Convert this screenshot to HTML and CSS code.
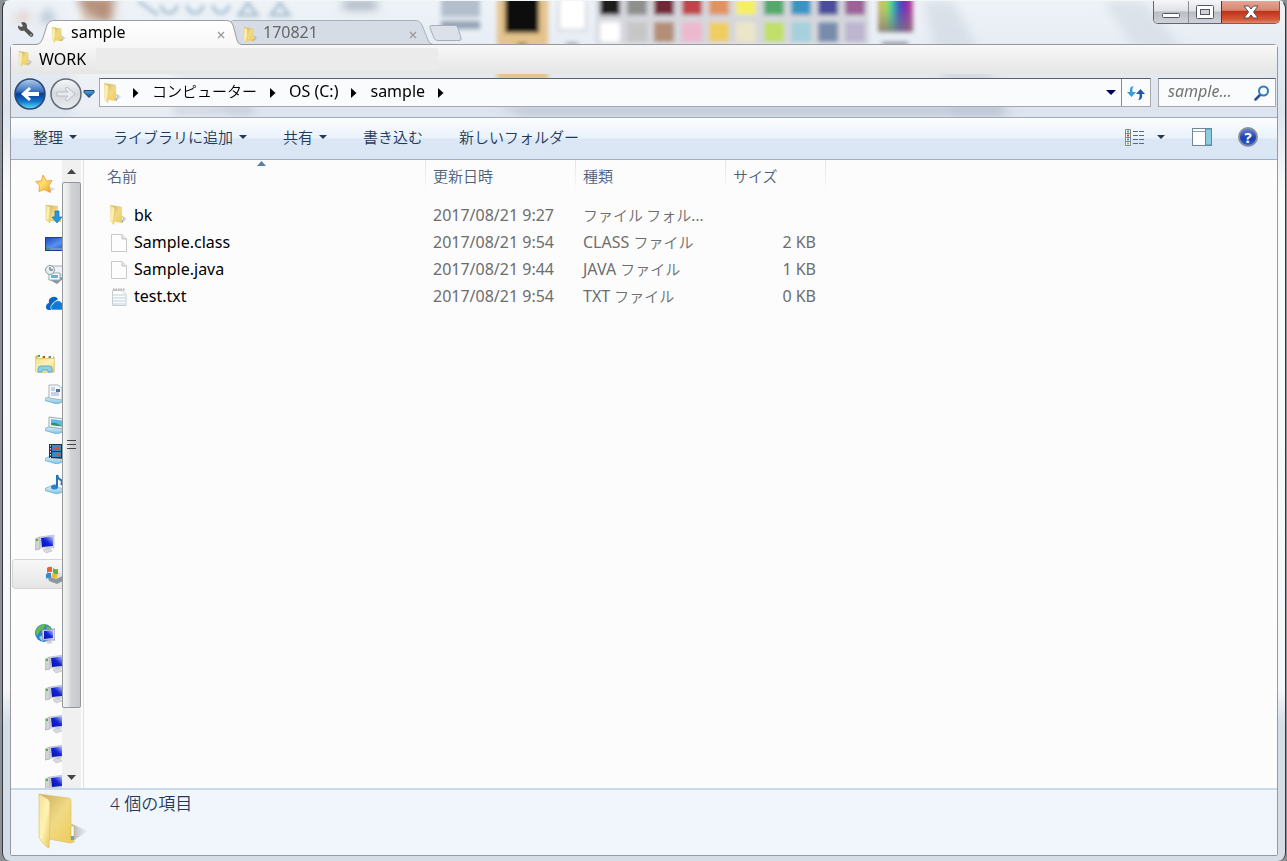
FILE: index.html
```html
<!DOCTYPE html>
<html lang="ja">
<head>
<meta charset="utf-8">
<title>sample</title>
<link rel="stylesheet" href="styles.css">
</head>
<body>
<svg class="defs" aria-hidden="true">
  <defs>
    <linearGradient id="gFront" x1="0" y1="0" x2="1" y2="1"><stop offset="0" stop-color="#f3e09a"/><stop offset=".5" stop-color="#fff3b4"/><stop offset="1" stop-color="#e9c65a"/></linearGradient>
    <linearGradient id="gBack" x1="0" y1="0" x2="1" y2="1"><stop offset="0" stop-color="#c9ad5c"/><stop offset=".5" stop-color="#f0da86"/><stop offset="1" stop-color="#eccb55"/></linearGradient>
    <linearGradient id="gScreen" x1="0" y1="1" x2="1" y2="0"><stop offset="0" stop-color="#0610a0"/><stop offset=".5" stop-color="#1424d8"/><stop offset="1" stop-color="#c8d4ff"/></linearGradient>
    <linearGradient id="gDesk" x1="0" y1="0" x2="1" y2="1"><stop offset="0" stop-color="#1c4bc4"/><stop offset=".6" stop-color="#5a90f0"/><stop offset="1" stop-color="#2a5fd8"/></linearGradient>
    <linearGradient id="gStar" x1="0" y1="0" x2="1" y2="1"><stop offset="0" stop-color="#ffc07a"/><stop offset=".45" stop-color="#ffe070"/><stop offset="1" stop-color="#f59a1c"/></linearGradient>
    <linearGradient id="gTray" x1="0" y1="0" x2="0" y2="1"><stop offset="0" stop-color="#e4f5fb"/><stop offset="1" stop-color="#7dc0de"/></linearGradient>
    <linearGradient id="gBlueBtn" x1="0" y1="0" x2="0" y2="1"><stop offset="0" stop-color="#b4cdec"/><stop offset=".4" stop-color="#3a74c4"/><stop offset=".5" stop-color="#0a3a94"/><stop offset=".75" stop-color="#1478cc"/><stop offset="1" stop-color="#5ce4fc"/></linearGradient>
    <linearGradient id="gGrayBtn" x1="0" y1="0" x2="0" y2="1"><stop offset="0" stop-color="#f6f7f9"/><stop offset=".5" stop-color="#d5d9df"/><stop offset="1" stop-color="#e9ecf0"/></linearGradient>
    <linearGradient id="gArrow" x1="0" y1="0" x2="0" y2="1"><stop offset="0" stop-color="#48a8dc"/><stop offset="1" stop-color="#1a4aa0"/></linearGradient>
    <linearGradient id="gRainbow"><stop offset="0" stop-color="#c8a878"/><stop offset=".2" stop-color="#b8d84c"/><stop offset=".4" stop-color="#3cd0a0"/><stop offset=".6" stop-color="#3c50c8"/><stop offset=".8" stop-color="#8428b0"/><stop offset="1" stop-color="#c85090"/></linearGradient>
    <linearGradient id="gShade" x1="0" y1="0" x2="0" y2="1"><stop offset=".3" stop-color="#888" stop-opacity="0"/><stop offset="1" stop-color="#807078" stop-opacity=".8"/></linearGradient>
    <linearGradient id="gTab" x1="0" y1="0" x2="0" y2="1"><stop offset="0" stop-color="#fff"/><stop offset="1" stop-color="#f7f7f7"/></linearGradient>
    <linearGradient id="gShadow"><stop offset="0" stop-color="#8a8f9a" stop-opacity=".7"/><stop offset="1" stop-color="#8a8f9a" stop-opacity="0"/></linearGradient>
    <filter id="soft" x="-5%" y="-20%" width="110%" height="140%"><feGaussianBlur stdDeviation="2"/></filter>
    <filter id="softer" x="-20%" y="-20%" width="140%" height="140%"><feGaussianBlur stdDeviation="5"/></filter>
    <symbol id="folder" viewBox="0 0 50 56">
      <path d="M32 50 L50 38 L34 31Z" fill="url(#gShadow)"/>
      <path d="M1 1 L30 5 Q33 5 33 8 V31 L36 33 V49 L32 50 L11 46Z" fill="url(#gBack)" stroke="#d9bd66" stroke-width=".6"/>
      <path d="M33 33h3v13h-3z" fill="#fff" stroke="#c9a94c" stroke-width=".6"/><path d="M33 43h3v4h-3z" fill="#5aa6dc"/>
      <path d="M1 1 L10 6 Q12 8 12 12 V35 L11 55 L9 54 Q1 47 1 43Z" fill="url(#gFront)" stroke="#dcbf60" stroke-width=".6"/>
    </symbol>
    <symbol id="file" viewBox="0 0 16 18"><path d="M.5.5H11L15.500 5V17.500H.5Z" fill="#fdfdfd" stroke="#c9c9c9"/><path d="M11 .5V5H15.500" fill="#e4e4e4" stroke="#c4c4c4"/></symbol>
    <symbol id="text" viewBox="0 0 16 18"><path d="M1.500 2.500H11L15 6V17.500H1.500Z" fill="#fafcfd" stroke="#c8ced2"/><path d="M2 7h12M2 10h13M2 13h13M2 16h13" stroke="#cfe0e9" stroke-width="1.500"/><path d="M2 1.500h12" stroke="#aaa" stroke-width="2" stroke-dasharray="1.500 1"/></symbol>
    <symbol id="star" viewBox="0 0 20 20"><path d="M12 19 L20 15 L16 13Z" fill="#d8d8e0"/><path d="M8 1 L11.500 7 L17 6.500 L14 11.500 L15.500 18.500 L9 15.500 L4 17.500 L4.500 11.500 L.8 7.500 L6.500 6.800Z" fill="url(#gStar)" stroke="#e99a32" stroke-width=".8"/></symbol>
    <symbol id="download" viewBox="0 0 20 20"><path d="M1 1l12 1v12l3 1v3l-12-1z" fill="url(#gBack)"/><path d="M1 1l4 2v16l-4-3z" fill="url(#gFront)" stroke="#d5b964" stroke-width=".5"/><path d="M10 7h4v6h3l-5 6-5-6h3z" fill="#2696e0" stroke="#1370bc" stroke-width=".7"/></symbol>
    <symbol id="desktop" viewBox="0 0 20 20"><path d="M0 3h20v14H0z" fill="#1a3f9e"/><path d="M1 4h19v10H1z" fill="url(#gDesk)"/><path d="M1 14h19v2H1z" fill="#6f96c0"/><path d="M1 14h4v2H1z" fill="#3c9a58"/></symbol>
    <symbol id="recent" viewBox="0 0 20 20"><path d="M3 15l9-4 7 3-7 6z" fill="#8c979e"/><path d="M7 2h11v9H7z" fill="#eef3f7" stroke="#a2adb8"/><path d="M4 9h11v7H4z" fill="#fff" stroke="#9aa8b4"/><path d="M6 11h7v3H6z" fill="#56b8dc"/><circle cx="5" cy="6" r="4.500" fill="#e4edf2" stroke="#8c9aa4"/><path d="M5 3v3h3" fill="none" stroke="#556"/></symbol>
    <symbol id="cloud" viewBox="0 0 20 20"><path d="M1 13a4 4 0 0 1 3-4a5 5 0 0 1 9-4l-6 5-1 6H4a3 3 0 0 1-3-3z" fill="#0a66c0"/><path d="M7 16a3.500 3.500 0 0 1 1-6a5 5 0 0 1 9-1q3 1 3 7z" fill="#0c7cdc" stroke="#fff" stroke-width=".6"/></symbol>
    <symbol id="library" viewBox="0 0 20 20"><path d="M1 2h5l1 1h12v15H1z" fill="#e8cf70" stroke="#c8a944"/><path d="M3 1h4v3H3zM8 2h5v2H8zM14 2h4v2h-4z" fill="#fff"/><path d="M3 1h2v2H3z" fill="#34b04c"/><path d="M8 2h2v2H8z" fill="#d84830"/><path d="M14 2h2v2h-2z" fill="#3c90dc"/><path d="M1 5h18v13H1z" fill="url(#gFront)"/><path d="M3 18v-3q0-3 3-3h8q3 0 3 3v3h-4v-2H7v2z" fill="#8dd0ea" stroke="#5caed0"/></symbol>
    <symbol id="tray" viewBox="0 0 20 20"><path d="M0 14.500L6 12l14 3v2l-8 3L0 16.500Z" fill="url(#gTray)" stroke="#68aed0" stroke-width=".8"/></symbol>
    <symbol id="docs" viewBox="0 0 20 20"><use href="#tray"/><path d="M4 1h9l4 3v12L4 14z" fill="#f8fafc" stroke="#a6b2c2"/><path d="M6 4h4M6 6h4M6 9h8M6 11h8" stroke="#98a8c8"/><path d="M11 5h4v3h-4z" fill="#3f78c4"/></symbol>
    <symbol id="pics" viewBox="0 0 20 20"><use href="#tray"/><path d="M4 3l15 2v10L4 13z" fill="#f4f7fa" stroke="#98aabd"/><path d="M6 5l11 1.500v6L6 11z" fill="#5eb8e4"/><path d="M6 9l5 0 6 3.500-11-1.500z" fill="#329262"/></symbol>
    <symbol id="video" viewBox="0 0 20 20"><use href="#tray"/><path d="M4 0h15v15L4 14z" fill="#283440"/><path d="M7 1h9v6H7zM7 8h9v5H7z" fill="#348ccc"/><path d="M9 4l4-2 3 4H8zM10 11l4-2 2 3z" fill="#d4542c"/><path d="M5.500 1v13M17.500 1v13" stroke="#dce4e8" stroke-dasharray="1.500 1.500"/></symbol>
    <symbol id="music" viewBox="0 0 20 20"><use href="#tray"/><ellipse cx="9.500" cy="13" rx="3.500" ry="2.500" fill="#2484cc"/><path d="M12 13V1q1 4 4 5 2 2 0 5" fill="none" stroke="#2474bc" stroke-width="2"/></symbol>
    <symbol id="pc" viewBox="0 0 20 20"><path d="M0 5l5-2v12l-5 1z" fill="#d0d4d6" stroke="#a4aaae" stroke-width=".7"/><path d="M1 5h2v2H1z" fill="#48b43c"/><path d="M8 16l6-2 3 3-6 2z" fill="#d7d9dc" stroke="#b0b4b8" stroke-width=".5"/><path d="M5 3L19 1v13L6 14z" fill="#dde1e8" stroke="#abb0bb" stroke-width=".6"/><path d="M6 4l12-2v10L7 13z" fill="url(#gScreen)"/></symbol>
    <symbol id="drive" viewBox="0 0 20 20"><path d="M3 14l10-5 7 2v5l-8 4-8-3z" fill="#8f979b"/><path d="M5 13l9-4 6 2-9 4z" fill="#dfe3e5"/><path d="M2 4q2-2 5-1v5q-3-1-5 1z" fill="#e4642c"/><path d="M8 4q2 2 5 1v5q-3 1-5-1z" fill="#63b040"/><path d="M1 10q3-2 5-1v5q-3-1-5 1z" fill="#3488d0"/><path d="M7 9q2 2 5 1v4q-3 1-5-1z" fill="#f0b828"/></symbol>
    <symbol id="network" viewBox="0 0 20 20"><circle cx="9" cy="9" r="9" fill="#2d80cc"/><path d="M2 4q4-4 9-4l-2 4-4 3-3 5q-2-4 0-8zM11 2l4 1 2 5h-5z" fill="#62bd4a"/><path d="M4 13l4-2v6q-3-1-4-4z" fill="#8cd0f0"/><path d="M10 17l5-1 3 3-5 1z" fill="#d0d4da"/><path d="M7 6l13-1v11H8z" fill="#dde1e8" stroke="#9098b4"/><path d="M9 7l9-1v8l-9 1z" fill="url(#gScreen)"/></symbol>
    <symbol id="right" viewBox="0 0 6 10"><path d="M0 0l5.500 5L0 10z" fill="#000"/></symbol>
    <symbol id="down" viewBox="0 0 8 4"><path d="M0 0h8L4 4z" fill="currentColor"/></symbol>
    <symbol id="cross" viewBox="0 0 8 8"><path d="M1 1l6 6M7 1L1 7" stroke="#999" stroke-width="1.300"/></symbol>
  </defs>
</svg>

<div class="window">
  <svg class="backdrop" width="1200" height="117" aria-hidden="true">
    <g filter="url(#softer)">
      <path d="M74 -5L112 -5 108 22 80 22Z" fill="#a87858" opacity=".8"/>
      <path d="M8 20l14-12 6 12z" fill="#d8a79a" opacity=".5"/>
      <path d="M36 20l10-14 6 16z" fill="#8696b0" opacity=".6"/>
      <path d="M70 0L230 117H70Z" fill="#fff" opacity=".4"/>
      <path d="M920 0H950L1010 117H950Z" fill="#bfc8d4" opacity=".4"/>
      <path d="M1100 0H1140L1190 60H1140Z" fill="#cdd4de" opacity=".5"/>
      <path d="M495 106h505v8H520zM170 106h80v6h-80z" fill="#aab4c4" opacity=".7"/>
      <path d="M340 4h34" stroke="#8c98a6" stroke-width="8" opacity=".8"/>
    </g>
    <g filter="url(#soft)">
      <path d="M135 0l20 14M158 4a8 8 0 0 0 16 0M184 4a8 8 0 0 0 16 0M210 4a8 8 0 0 0 16 0M236 14l9-12 9 12zM268 14l9-12 9 12z" fill="none" stroke="#a9bfd0" stroke-width="3"/>
      <path d="M438 -4h39v20h-39z" fill="#b4bfcd"/><path d="M438 20h39v8h-39z" fill="#95a3b6"/>
      <path d="M494 -5h51v84h-51z" fill="#e4c38d"/><path d="M502 -5h34v37h-34z" fill="#0b0b0b"/><path d="M513 42l6 5 6-5z" fill="#666"/>
      <path d="M556 -5h27v34h-27z" fill="#fff" stroke="#ccd2d8" stroke-width="2"/><path d="M563 42h12v2h-12z" fill="#778"/>
      <path d="M593 -5h273v49H593z" fill="#d5d7dd"/>
      <path d="M875 -5h35v36h-35z" fill="url(#gRainbow)"/><path d="M875 -5h35v36h-35z" fill="url(#gShade)"/><path d="M879 41h26v4h-26z" fill="#8c949e"/>
      <g>
        <path d="M597 -6h20v20h-20z" fill="#1b1b1b"/><path d="M624 -6h20v20h-20z" fill="#8f8f8f"/><path d="M651 -6h20v20h-20z" fill="#732736"/><path d="M679 -6h20v20h-20z" fill="#bf444a"/><path d="M706 -6h20v20h-20z" fill="#df9460"/><path d="M733 -6h20v20h-20z" fill="#f5ef65"/><path d="M761 -6h20v20h-20z" fill="#52a96c"/><path d="M788 -6h20v20h-20z" fill="#3995c2"/><path d="M815 -6h20v20h-20z" fill="#484d9b"/><path d="M842 -6h20v20h-20z" fill="#9b6299"/>
        <path d="M597 21h20v20h-20z" fill="#fff"/><path d="M624 21h20v20h-20z" fill="#c7c7c7"/><path d="M651 21h20v20h-20z" fill="#b28d77"/><path d="M679 21h20v20h-20z" fill="#edb8cd"/><path d="M706 21h20v20h-20z" fill="#f0cd5e"/><path d="M733 21h20v20h-20z" fill="#ebe5c9"/><path d="M761 21h20v20h-20z" fill="#c0e068"/><path d="M788 21h20v20h-20z" fill="#a6d0dc"/><path d="M815 21h20v20h-20z" fill="#778cab"/><path d="M842 21h20v20h-20z" fill="#bdb5d2"/>
      </g>
    </g>
  </svg>

  <header class="titlebar">
    <button class="wrench" aria-label="設定"><svg width="17" height="17" viewBox="0 0 17 17"><path d="M4 1.500L7 1q3 1 3 4v2l6 5.500q1 2-.5 3t-3-.5L7 9.500q-4 1.500-6-3V4.500L4 6l2-1z" fill="#555"/><circle cx="14" cy="14" r=".8" fill="#ddd"/></svg></button>
    <nav class="tabs">
      <div class="tab active">
        <svg class="tab-shape" viewBox="0 0 204 25" preserveAspectRatio="none" aria-hidden="true"><path d="M0 24.500Q4 24 6 18L10 5Q12 .5 16 .5H189Q194 .5 196 5L200 20Q201 24 204 24.500V25H0Z" fill="url(#gTab)"/><path d="M0 24.500Q4 24 6 18L10 5Q12 .5 16 .5H189Q194 .5 196 5L200 20Q201 24 204 24.500" fill="none" stroke="#9a9da2"/></svg>
        <svg class="icon16"><use href="#folder"/></svg><a href="#">sample</a>
        <button class="close-tab" aria-label="閉じる"><svg width="8" height="8"><use href="#cross"/></svg></button>
      </div>
      <div class="tab">
        <svg class="tab-shape" viewBox="0 0 204 25" preserveAspectRatio="none" aria-hidden="true"><path d="M0 5Q0 .5 6 .5H186Q191 .5 193 5L199 20Q200 24 204 24.500H7Z" fill="#d6dce5" stroke="#abb1ba"/></svg>
        <svg class="icon16"><use href="#folder"/></svg><a href="#">170821</a>
        <button class="close-tab" aria-label="閉じる"><svg width="8" height="8"><use href="#cross"/></svg></button>
      </div>
      <button class="new-tab" aria-label="新しいタブ"><svg width="33" height="17"><path d="M3 .5H26Q28 .5 29 3L32 13Q33 15.500 30 15.500H9Q6 15.500 5 13L1 3Q0 .5 3 .5Z" fill="#dce1e9" stroke="#a9aeb6"/></svg></button>
    </nav>
    <div class="controls">
      <button class="min" aria-label="最小化"><svg width="18" height="6"><rect x=".5" y=".5" width="17" height="4" rx="1" fill="#fff" stroke="#535666"/></svg></button>
      <button class="max" aria-label="最大化"><svg width="18" height="14"><rect x=".5" y=".5" width="17" height="13" rx="1" fill="#fff" stroke="#535666"/><rect x="4.500" y="4.500" width="9" height="5" fill="#d0d2d8" stroke="#535666"/></svg></button>
      <button class="close" aria-label="閉じる"><svg width="16" height="14"><path d="M1 1h4.500L8 4l2.500-3H15l-4.500 6L15 13h-4.500L8 10l-2.500 3H1l4.500-6z" fill="#fff" stroke="#5b4a50"/></svg></button>
    </div>
  </header>

  <div class="client">
    <div class="bookmarks"><svg class="icon16"><use href="#folder"/></svg><a href="#">WORK</a><span class="blank"></span></div>

    <div class="navbar">
      <div class="history">
        <button aria-label="戻る"><svg width="32" height="32" viewBox="0 0 32 32"><circle cx="16" cy="16" r="15" fill="url(#gBlueBtn)" stroke="#2c4770" stroke-width="1.500"/><path d="M7 16l8-7 2 2-3 3h11v4H14l3 3-2 2z" fill="#fff"/></svg></button>
        <button aria-label="進む"><svg width="32" height="32" viewBox="0 0 32 32"><circle cx="16" cy="16" r="15" fill="url(#gGrayBtn)" stroke="#646a74" stroke-width="1.500"/><path d="M25 16l-8-7-2 2 3 3H7v4h11l-3 3 2 2z" fill="#e9ebee" stroke="#b8bcc4"/></svg></button>
        <button aria-label="履歴"><svg width="12" height="8"><path d="M1 .5h10v2L6 7.500 1 2.500z" fill="url(#gArrow)" stroke="#28466c"/></svg></button>
      </div>
      <div class="address">
        <svg class="icon20"><use href="#folder"/></svg>
        <svg class="chev"><use href="#right"/></svg><a href="#" class="jp">コンピューター</a>
        <svg class="chev"><use href="#right"/></svg><a href="#">OS (C:)</a>
        <svg class="chev"><use href="#right"/></svg><a href="#">sample</a>
        <svg class="chev"><use href="#right"/></svg>
        <button class="drop" aria-label="アドレス一覧"><svg width="10" height="5"><use href="#down"/></svg></button>
        <button class="refresh" aria-label="更新"><svg width="18" height="18" viewBox="0 0 18 18"><path d="M7 2Q5 3 5.500 8H9l-4.500 5L0 8h3Q2 2 7 2z" fill="#3c9cd4"/><path d="M11 16q2-1 1.500-6H9l4.500-5L18 10h-3q1 6-4 6z" fill="#2358ac"/></svg></button>
      </div>
      <label class="search"><input type="text" placeholder="sample..." aria-label="sampleの検索"><svg width="16" height="16" viewBox="0 0 16 16"><path d="M6.500 9.500L1.500 14.500" stroke="#264f94" stroke-width="2.500" stroke-linecap="round"/><circle cx="9.500" cy="6" r="4.500" fill="#f5faff" stroke="#3477bb" stroke-width="2"/></svg></label>
    </div>

    <div class="toolbar jp">
      <button>整理<svg class="caret"><use href="#down"/></svg></button>
      <button>ライブラリに追加<svg class="caret"><use href="#down"/></svg></button>
      <button>共有<svg class="caret"><use href="#down"/></svg></button>
      <button>書き込む</button>
      <button>新しいフォルダー</button>
      <div class="views">
        <button aria-label="表示"><svg width="19" height="17"><path d="M.5.500h5v16h-5zM.5 4.500h5M.5 8.500h5M.5 12.500h5" fill="#fff" stroke="#7f8894"/><path d="M2 2.500h2" stroke="#4ba04c" stroke-width="2"/><path d="M2 6.500h2" stroke="#dd3c24" stroke-width="2"/><path d="M2 10.500h2" stroke="#3c8ce0" stroke-width="2"/><path d="M2 14.500h2" stroke="#a0b020" stroke-width="2"/><path d="M8 2.500h11M8 6.500h11M8 10.500h11M8 14.500h11" stroke="#536b88" stroke-dasharray="5 1"/></svg></button>
        <button aria-label="表示の変更"><svg class="caret"><use href="#down"/></svg></button>
        <button class="preview" aria-label="プレビュー"><svg width="20" height="18"><rect x=".5" y=".5" width="19" height="17" fill="#fff" stroke="#6f8799"/><path d="M1 3.500h12" stroke="#8ba0b0"/><path d="M13.500 1h6v16h-6z" fill="#8ccbe0" stroke="#4c91ae"/></svg></button>
        <button class="help" aria-label="ヘルプ">?</button>
      </div>
    </div>

    <main class="content">
      <aside class="tree">
        <ul>
          <li><svg><use href="#star"/></svg></li>
          <li class="sub"><svg><use href="#download"/></svg></li>
          <li class="sub"><svg><use href="#desktop"/></svg></li>
          <li class="sub"><svg><use href="#recent"/></svg></li>
          <li class="sub"><svg><use href="#cloud"/></svg></li>
          <li></li>
          <li><svg><use href="#library"/></svg></li>
          <li class="sub"><svg><use href="#docs"/></svg></li>
          <li class="sub"><svg><use href="#pics"/></svg></li>
          <li class="sub"><svg><use href="#video"/></svg></li>
          <li class="sub"><svg><use href="#music"/></svg></li>
          <li></li>
          <li><svg><use href="#pc"/></svg></li>
          <li class="sub selected"><svg><use href="#drive"/></svg></li>
          <li></li>
          <li><svg><use href="#network"/></svg></li>
          <li class="sub"><svg><use href="#pc"/></svg></li>
          <li class="sub"><svg><use href="#pc"/></svg></li>
          <li class="sub"><svg><use href="#pc"/></svg></li>
          <li class="sub"><svg><use href="#pc"/></svg></li>
          <li class="sub"><svg><use href="#pc"/></svg></li>
        </ul>
      </aside>
      <div class="scrollbar">
        <button aria-label="上へ"><svg width="9" height="5"><path d="M0 5h9L4.500 0z" fill="#444"/></svg></button>
        <div class="track"><div class="thumb"><i></i><i></i><i></i></div></div>
        <button aria-label="下へ"><svg width="9" height="5"><path d="M0 0h9L4.500 5z" fill="#444"/></svg></button>
      </div>
      <div class="files">
        <table>
          <colgroup><col class="c-name"><col class="c-date"><col class="c-type"><col class="c-size"><col></colgroup>
          <thead><tr><th class="jp sorted">名前<svg class="sort" width="9" height="5"><path d="M0 5L4.500 0 9 5z" fill="#5b7fa6"/></svg></th><th class="jp">更新日時</th><th class="jp">種類</th><th class="jp">サイズ</th><th class="rest"></th></tr></thead>
          <tbody>
            <tr><td><div class="name"><svg class="icon20"><use href="#folder"/></svg><a href="#">bk</a></div></td><td>2017/08/21 9:27</td><td><span class="jp">ファイル フォル...</span></td><td></td><td></td></tr>
            <tr><td><div class="name"><svg class="icon18"><use href="#file"/></svg><a href="#">Sample.class</a></div></td><td>2017/08/21 9:54</td><td>CLASS <span class="jp">ファイル</span></td><td>2 KB</td><td></td></tr>
            <tr><td><div class="name"><svg class="icon18"><use href="#file"/></svg><a href="#">Sample.java</a></div></td><td>2017/08/21 9:44</td><td>JAVA <span class="jp">ファイル</span></td><td>1 KB</td><td></td></tr>
            <tr><td><div class="name"><svg class="icon18"><use href="#text"/></svg><a href="#">test.txt</a></div></td><td>2017/08/21 9:54</td><td>TXT <span class="jp">ファイル</span></td><td>0 KB</td><td></td></tr>
          </tbody>
        </table>
      </div>
    </main>

    <footer class="status"><svg width="50" height="56"><use href="#folder"/></svg><p>4 個の項目</p></footer>
  </div>
</div>
</body>
</html>
```

FILE: styles.css
```css
* { box-sizing: border-box; }

body {
  margin: 0;
  background: #8d9095;
  font: 16px/20px "Noto Sans", "Noto Sans CJK JP", sans-serif;
  color: #000;
}

button { margin: 0; padding: 0; border: 0; background: none; font: inherit; color: inherit; }
a { color: inherit; text-decoration: none; }
svg { display: block; flex: none; }
.defs { position: absolute; width: 0; height: 0; }
.jp { font-family: "Noto Sans CJK JP", sans-serif; font-size: 15px; font-weight: 350; }
.icon16 { width: 16px; height: 16px; }
.icon18 { width: 16px; height: 18px; }
.icon20 { width: 20px; height: 20px; }

.window {
  position: relative;
  display: flex;
  flex-direction: column;
  min-height: 100vh;
  margin: 0 1px 0 2px;
  padding: 0 7px 5px 7px;
  border: 1px solid #34383e;
  border-top-color: #f3f6f8;
  border-bottom: 0;
  border-radius: 8px;
  background: linear-gradient(#eef3f8, #dde4ee 110px, #fafbfc 190px, #f5f7fa 80%, #d5dde7 84%);
  overflow: hidden;
}

.backdrop { position: absolute; top: 0; left: 0; }

.titlebar { position: relative; display: flex; align-items: flex-end; height: 43px; }
.wrench { align-self: flex-start; margin: 20px 0 0 7px; }
.tabs { display: flex; align-items: flex-end; margin-left: 3px; }

.tab {
  position: relative;
  display: flex;
  align-items: center;
  gap: 4px;
  width: 204px;
  height: 24px;
  padding: 0 16px 0 14px;
  color: #666;
}
.tab + .tab { margin-left: -12px; }
.tab.active { z-index: 1; color: #000; }
.tab > * { position: relative; }
.tab > .tab-shape { position: absolute; left: 0; top: 0; width: 100%; height: 25px; }
.tab .icon16 { margin-top: 6px; }
.close-tab { margin: 6px 0 0 auto; }
.new-tab { margin: 0 0 2px -4px; }

.controls {
  display: flex;
  align-self: flex-start;
  margin-left: auto;
  margin-right: -2px;
  border: 1px solid #63666f;
  border-top: 0;
  border-radius: 0 0 5px 5px;
  overflow: hidden;
}
.controls button {
  display: grid;
  place-items: center;
  height: 22px;
  background: linear-gradient(#f4f5f7, #dfe1e5 45%, #b9bdc5 50%, #cfd2d8);
  border-left: 1px solid #888c95;
}
.controls .min { width: 34px; padding-top: 8px; border-left: 0; }
.controls .max { width: 33px; }
.controls .close { width: 58px; background: linear-gradient(#e6a595, #d98670 42%, #bd3219 48%, #d75a38 85%, #e5876c); border-color: #6e2a22; }

.client {
  position: relative;
  display: flex;
  flex: 1;
  flex-direction: column;
  border: 1px solid #96999e;
  border-radius: 4px 4px 2px 2px;
}

.bookmarks {
  display: flex;
  align-items: center;
  gap: 5px;
  height: 29px;
  padding: 0 0 2px 7px;
  background: linear-gradient(#f8f8f8, #e5e5e5);
}
.bookmarks .blank { width: 342px; height: 22px; margin-left: 5px; background: #ebebeb; }

.navbar { display: flex; align-items: flex-start; height: 43px; padding: 4px 1px 0 3px; }
.history { display: flex; align-items: center; width: 85px; gap: 4px; }
.history button:last-child { margin-left: -3px; }
.address, .search {
  display: flex;
  align-items: center;
  height: 29px;
  border: 1px solid #a4a8ae;
  border-top-color: #5c6066;
  background: #fafbfc;
}
.address { flex: 1; padding-left: 3px; }
.address .chev { width: 6px; height: 10px; margin: 0 13px; }
.address .icon20 { margin-right: -3px; }
.address a { padding-bottom: 4px; }
.address .drop { margin-left: auto; padding: 0 5px; color: #000060; }
.address .refresh { display: grid; place-items: center; width: 29px; height: 27px; border-left: 1px solid #85898f; }
.search { width: 118px; margin-left: 7px; padding: 0 5px 0 9px; }
.search input { flex: 1; width: 0; height: 24px; padding: 0 0 3px; border: 0; outline: 0; background: none; font: italic 16px/20px "Noto Sans", sans-serif; }
.search input::placeholder { color: #737373; opacity: 1; }

.toolbar {
  display: flex;
  align-items: center;
  gap: 36px;
  height: 43px;
  padding: 0 19px 3px 22px;
  border-top: 1px solid #a2aac2;
  border-bottom: 1px solid #a0afc6;
  background: linear-gradient(#fcfeff, #eaf2fb 48%, #dce7f5 52%, #dbe6f4);
  color: #1e395b;
}
.toolbar button { display: flex; align-items: center; gap: 6px; }
.caret { width: 8px; height: 4px; }
.views { display: flex; align-items: center; margin-left: auto; }
.views button + button { margin-left: 13px; }
.views .preview { margin-left: 27px; }
.toolbar .views .help {
  justify-content: center;
  width: 20px;
  height: 20px;
  margin-left: 26px;
  border: 2px solid #8a8fa0;
  border-radius: 50%;
  background: linear-gradient(#5f7fd8, #1c3cb0 60%, #2f64d0);
  color: #fff;
  font-family: "Noto Sans", sans-serif;
  font-weight: 700;
}

.content { display: flex; flex: 1; background: #fcfcfc; }
.tree { position: relative; width: 51px; overflow: hidden; }
.tree ul { position: absolute; top: 0; left: 0; margin: 0; padding: 9px 0 0 1px; list-style: none; }
.tree li { display: flex; align-items: center; width: 70px; height: 30px; padding-left: 23px; }
.tree li.sub { padding-left: 33px; }
.tree li.selected { padding-left: 32px; border: 1px solid #d5d5d5; border-radius: 3px; background: linear-gradient(#f8f8f8, #e5e5e5); }
.tree li svg { width: 20px; height: 20px; }

.scrollbar { display: flex; flex-direction: column; width: 19px; background: #f0f0f0; }
.scrollbar button { display: grid; place-items: center; height: 22px; }
.track { flex: 1; }
.thumb {
  display: flex;
  flex-direction: column;
  align-items: center;
  justify-content: center;
  gap: 3px;
  height: 90%;
  border: 1px solid #94979c;
  border-radius: 2px;
  background: linear-gradient(90deg, #f4f4f4, #e4e5e6 35%, #d2d3d6 45%, #c6c8cc);
}
.thumb i { width: 9px; height: 1px; background: #444; }

.files { flex: 1; margin-left: 2px; border-left: 1px solid #d6e5f5; }
table { width: 100%; table-layout: fixed; border-collapse: collapse; }
.c-name { width: 342px; }
.c-date, .c-type { width: 150px; }
.c-size { width: 100px; }
th {
  position: relative;
  height: 41px;
  padding: 0 7px 9px;
  background: linear-gradient(#d8e5f3, #eef3f9 20px, transparent 30px) right top / 1px 30px no-repeat;
  color: #4c607a;
  text-align: left;
}
th.sorted { padding-left: 23px; }
th.rest { background: none; }
.sort { position: absolute; left: 173px; top: 1px; }
td { height: 27px; padding: 0 7px; color: #6d6d6d; white-space: nowrap; }
td:nth-child(4) { padding-right: 10px; text-align: right; }
td:first-child { padding-left: 25px; color: #000; }
.name { display: flex; align-items: center; gap: 5px; }
.name .icon18 { margin: 2px 2px 0; }

.status {
  display: flex;
  height: 67px;
  padding: 3px 0 0 27px;
  gap: 22px;
  border-top: 2px solid #cbdaeb;
  background: #f1f5fc;
  color: #1e395b;
}
.status p { margin: 1px 0 0; font-size: 17px; font-weight: 350; }
```
